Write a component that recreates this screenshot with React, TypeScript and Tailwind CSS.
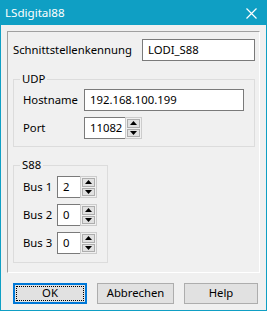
import type { ReactNode } from "react";

const font = { fontFamily: '"Noto Sans", "Liberation Sans", sans-serif' };

function TextBox({ value, className }: { value: string; className: string }) {
  return (
    <div className={`flex h-[22px] items-center border border-[#7a7a7a] bg-white pl-[5px] ${className}`}>
      {value}
    </div>
  );
}

function SpinBox({ value, width }: { value: string; width: string }) {
  return (
    <div className="flex h-[22px]">
      <div className={`flex items-center border border-r-0 border-[#7a7a7a] bg-white pl-[5px] ${width}`}>{value}</div>
      <div className="flex w-[17px] flex-col gap-[1px] border border-[#cccccc] bg-[#f0f0f0] p-[1px]">
        <SpinArrow up />
        <SpinArrow />
      </div>
    </div>
  );
}

function SpinArrow({ up }: { up?: boolean }) {
  return (
    <div className="flex flex-1 items-center justify-center border border-[#adadad] bg-[#e1e1e1]">
      <svg width="7" height="4" viewBox="0 0 7 4">
        {up ? <polygon points="3.5,0 7,4 0,4" fill="#000" /> : <polygon points="0,0 7,0 3.5,4" fill="#000" />}
      </svg>
    </div>
  );
}

function Group({ title, className, children }: { title: string; className: string; children: ReactNode }) {
  return (
    <fieldset className={`border border-[#dcdcdc] ${className}`}>
      <legend className="ml-[6px] px-[2px] leading-[16px]">{title}</legend>
      {children}
    </fieldset>
  );
}

function DialogButton({ label, focused }: { label: string; focused?: boolean }) {
  if (focused) {
    return (
      <button type="button" className="h-[21px] w-[74px] border-2 border-[#0078d7] bg-[#e1e1e1] p-[1px]">
        <span className="flex h-full items-center justify-center border border-dotted border-black">{label}</span>
      </button>
    );
  }
  return (
    <button type="button" className="flex h-[21px] items-center justify-center border border-[#adadad] bg-[#e1e1e1]">
      {label}
    </button>
  );
}

export default function App() {
  return (
    <div style={font} className="flex h-[311px] w-[267px] flex-col border border-[#0f9fc4] bg-[#f0f0f0] text-[11.3px] text-black">
      <div className="flex h-[24px] shrink-0 items-center justify-between bg-[#0f9fc4] pl-[4px] pr-[9px] text-[11.6px] text-white">
        <span>LSdigital88</span>
        <svg width="11" height="11" viewBox="0 0 11 11">
          <path d="M0.5 0.5 L10.5 10.5 M10.5 0.5 L0.5 10.5" stroke="#fff" strokeWidth="1.2" />
        </svg>
      </div>

      <div className="ml-[6px] mt-[6px] flex h-[242px] w-[253px] flex-col border border-b-white border-l-[#a0a0a0] border-r-white border-t-[#a0a0a0]">
        <div className="mt-[7px] flex items-center pl-[5px] pr-[4px]">
          <span className="flex-1">Schnittstellenkennung</span>
          <TextBox value="LODI_S88" className="w-[113px]" />
        </div>

        <Group title="UDP" className="ml-[5px] mt-[10px] w-[242px] pb-[7px]">
          <div className="mt-[2px] flex flex-col gap-[6px]">
            <div className="flex items-center">
              <span className="w-[70px] pl-[9px]">Hostname</span>
              <TextBox value="192.168.100.199" className="w-[160px]" />
            </div>
            <div className="flex items-center">
              <span className="w-[70px] pl-[9px]">Port</span>
              <SpinBox value="11082" width="w-[41px]" />
            </div>
          </div>
        </Group>

        <Group title="S88" className="ml-[5px] mt-[10px] w-[95px] pb-[8px]">
          <div className="mt-[3px] flex flex-col gap-[6px]">
            {[
              ["Bus 1", "2"],
              ["Bus 2", "0"],
              ["Bus 3", "0"],
            ].map(([label, value]) => (
              <div key={label} className="flex items-center">
                <span className="w-[43px] pl-[9px]">{label}</span>
                <SpinBox value={value} width="w-[23px]" />
              </div>
            ))}
          </div>
        </Group>
      </div>

      <div className="ml-[12px] mt-[10px] grid w-[244px] grid-cols-[74px_77px_74px] gap-x-[10px]">
        <DialogButton label="OK" focused />
        <DialogButton label="Abbrechen" />
        <DialogButton label="Help" />
      </div>
    </div>
  );
}
